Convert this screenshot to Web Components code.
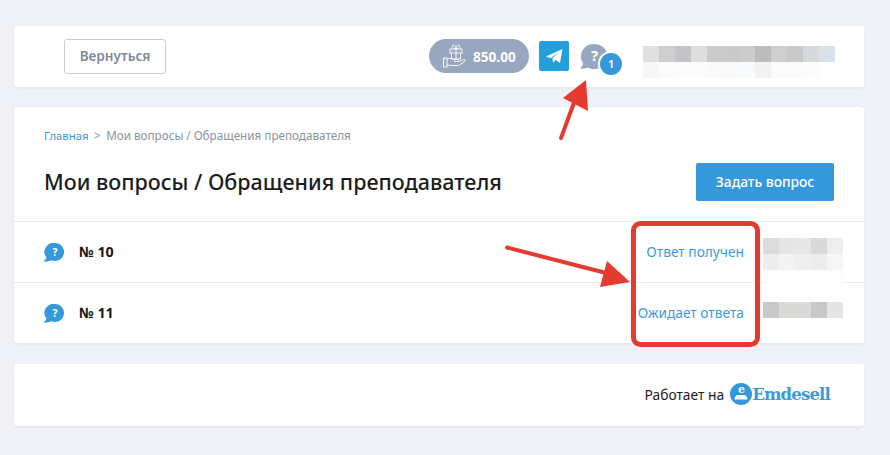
<!DOCTYPE html>
<html lang="ru"><head><meta charset="utf-8"><title>Мои вопросы</title>
<style>
html,body{margin:0;padding:0}
body{background:#f0f1f6;font-family:"Noto Sans","Open Sans",sans-serif;width:890px;height:455px;overflow:hidden;position:relative}
</style></head><body>
<app-page>
  <top-bar></top-bar>
  <questions-card>
    <question-row num="№ 10" status="Ответ получен" blur="a"></question-row>
    <question-row num="№ 11" status="Ожидает ответа" blur="b"></question-row>
  </questions-card>
  <foot-bar></foot-bar>
</app-page>
<note-overlay></note-overlay>
<script>
function def(name,html,init){
  customElements.define(name,class extends HTMLElement{
    connectedCallback(){
      if(this.shadowRoot)return;
      const r=this.attachShadow({mode:'open'});
      r.innerHTML=html;
      if(init)init(r,this);
    }
  });
}
function cells(r,sel,colors){
  const g=r.querySelector(sel);
  colors.forEach(c=>{const d=document.createElement('i');d.style.background=c;g.appendChild(d);});
}
def('app-page',`<style>:host{display:flex;flex-direction:column;gap:20px;padding:26px 26px 0 14px;width:850px}</style><slot></slot>`);
def('top-bar',`<style>
:host{display:flex;align-items:center;height:61px;background:#fff;border-radius:3px;box-shadow:0 1px 3px rgba(60,70,100,.08);padding:0 29px 0 50px}
.back{box-sizing:border-box;width:102px;height:35px;margin-top:-1px;padding-bottom:2px;border:1px solid #c9ced6;border-radius:3px;color:#7f8a96;font:600 13.6px "Noto Sans",sans-serif;display:flex;align-items:center;justify-content:center}
.sp{flex:1}
.bal{box-sizing:border-box;width:100px;height:34px;margin-top:-1px;border-radius:17px;background:#98a6c0;color:#fff;font:700 13.6px "Noto Sans",sans-serif;display:flex;align-items:center;padding-left:14px;gap:7px}
.tg{width:30px;height:30px;margin:-1px 0 0 10px;background:#259fdc;border-radius:2px;display:flex;align-items:center;justify-content:center}
.q{position:relative;width:44px;height:36px;margin:1px 0 0 10px}
.q .bub{position:absolute;left:0;top:4px}
.badge{position:absolute;left:21px;top:14px;width:22px;height:22px;border-radius:50%;background:#3498db;box-shadow:0 0 0 2px #fff;color:#fff;font:700 10px/22px "Noto Sans",sans-serif;text-align:center}
.blur{display:grid;grid-template-columns:repeat(12,16px);grid-auto-rows:16px;margin:11px 0 0 20px}
.blur i{display:block}
</style>
<div class="back">Вернуться</div><div class="sp"></div>
<div class="bal"><svg width="23" height="26" viewBox="0 0 23 26" fill="none" stroke="#fff" stroke-width=".9"><rect x="7" y="6" width="12" height="4"/><path d="M8.500 10v6h9v-6M13 6v10M13 6c-3-.500-4.500-2-3.500-3.500S13 3 13 6c0-3 2.500-5 3.500-3.500S16 5.500 13 6"/><rect x=".5" y="15" width="3.500" height="9"/><path d="M4 16.500c2-1.500 4-1.500 6 0h4c1.500 0 1.500 2 0 2h-3 5l4.500-2c1.500-.500 2 1 1 2l-6 4h-7l-4.500-.5"/></svg><span>850.00</span></div>
<div class="tg"><svg width="17" height="15" viewBox="0 0 17 15"><path fill="#fff" d="M0 7.500 16.500 0 14 14l-4.500-3.200-2.300 3.200-.8-4.700L13 3 4.500 9.300z"/></svg></div>
<div class="q"><svg class="bub" width="30" height="30" viewBox="0 0 30 30"><path fill="#98a6c0" d="M15.500 1a13 12.500 0 0 1 0 25c-2.500 0-4.500-.5-6.500-1.600-2.500.9-5 1.300-8 1.200 1.800-1.500 2.800-3 3.200-5A12.500 12.500 0 0 1 15.500 1z"/><text x="15.500" y="18" text-anchor="middle" fill="#fff" font-family="Noto Sans" font-weight="700" font-size="15">?</text></svg><div class="badge">1</div></div>
<div class="blur"></div>`,r=>cells(r,'.blur',['#e0e0e0','#cfcece','#c3c5c8','#dedede','#cbcbcb','#cacaca','#cbcccc','#bcbcbc','#cfcfcf','#c8c9ca','#d7d8da','#d9e2ea','#f6f6f6','#fbfbfb','#fcfcfc','#fcfcfc','#fafafa','#f8f9fa','#f9fafb','#f2f2f2','#fbfbfb','#fbfbfb','#fcfcfc','#fff']));
def('questions-card',`<style>
:host{display:block;height:236px;background:#fff;border-radius:3px;box-shadow:0 1px 3px rgba(60,70,100,.08);overflow:hidden}
.crumbs{padding:20px 30px 0;height:17px;font:11.7px/16px "Noto Sans",sans-serif;color:#8b939c;white-space:nowrap}
.crumbs b{font-weight:400;color:#3498db;font-size:11.3px}.crumbs span{margin:0 5.500px}
.head{display:flex;align-items:center;justify-content:space-between;padding:0 30px;height:38px;margin-top:19px}
h1{margin:0;font:500 21.500px/38px "Noto Sans",sans-serif;color:#1c1c1c}
.btn{width:138px;height:38px;background:#3498db;border-radius:2px;color:#fff;font:500 13.8px/38px "Noto Sans",sans-serif;text-align:center}
.rows{margin-top:20px;border-top:1px solid #e8ebf1}
</style>
<div class="crumbs"><b>Главная</b><span>&gt;</span>Мои вопросы / Обращения преподавателя</div>
<div class="head"><h1>Мои вопросы / Обращения преподавателя</h1><div class="btn">Задать вопрос</div></div>
<div class="rows"><slot></slot></div>`);
def('question-row',`<style>
:host{display:flex;align-items:center;height:60px;padding:0 21px 0 29px;position:relative}
:host(:not(:last-child)){border-bottom:1px solid #e8ebf1}
svg{display:block;margin-top:1px}
.n{margin:-2px 0 0 15px;font:700 14.300px "Noto Sans",sans-serif;color:#1a1a1a;flex:1}
.s{margin-top:-2px;font:13.75px "Noto Sans",sans-serif;color:#3d9bdc;white-space:nowrap}
.blur{width:80px;height:44px;margin-left:19px;display:grid;grid-template-columns:repeat(5,16px);grid-auto-rows:16px;align-self:flex-start;margin-top:16px}
.blur.b{margin-top:19px;height:16px}
.blur i{display:block}
</style>
<svg width="21" height="19" viewBox="0 0 21 19"><path fill="#3498db" d="M12 0a9 9 0 1 1-3.500 17.300c-2 1-5 1.500-8.500 1.200 1.800-1 3-2.200 3.500-4A9 9 0 0 1 12 0z"/><text x="12" y="13" text-anchor="middle" fill="#fff" font-family="Noto Sans" font-weight="700" font-size="10.500">?</text></svg>
<div class="n"></div><div class="s"></div><div class="blur"></div>`,(r,h)=>{
  r.querySelector('.n').textContent=h.getAttribute('num');
  r.querySelector('.s').textContent=h.getAttribute('status');
  const t=h.getAttribute('blur');
  r.querySelector('.blur').classList.add(t);
  cells(r,'.blur',t==='a'
    ?['#dcdbdb','#e6e6e4','#e6e7e7','#d9d9d9','#eeeeee','#ededed','#f3f3f1','#efefef','#ececec','#f6f6f6','#fdfdfd','#fdfdfd','#fdfdfd','#fdfdfd','#fdfdfd']
    :['#c9c9c9','#d9d9d5','#d8d9da','#c8c8c8','#e4e4e4']);
});
def('foot-bar',`<style>
:host{display:flex;align-items:center;justify-content:flex-end;height:62px;margin-top:1px;background:#fff;border-radius:3px;box-shadow:0 1px 3px rgba(60,70,100,.08);padding:0 34px 0 0;gap:6px}
.t{margin-top:-2px;font:13.8px "Noto Sans",sans-serif;color:#1c1c1c}
.logo{display:flex;align-items:center;gap:0;margin-top:-2px}
.e{font:700 16.500px "DejaVu Serif","Liberation Serif",serif;letter-spacing:-.82px;color:#3d9bdc}
</style>
<div class="t">Работает на</div>
<div class="logo"><svg width="22" height="22" viewBox="0 0 24 24"><circle cx="12" cy="12" r="12" fill="#3498db"/><text x="12.500" y="11" text-anchor="middle" font-family="DejaVu Serif" font-weight="700" font-size="12" fill="#fff">e</text><path fill="#fff" d="M5 18c0-3 1.500-5 4-5h6c2.500 0 4 2 4 5z"/></svg><span class="e">Emdesell</span></div>`);
def('note-overlay',`<style>:host{position:absolute;left:0;top:0;width:890px;height:455px;pointer-events:none}svg{display:block}</style>
<svg width="890" height="455" viewBox="0 0 890 455">
<rect x="633.500" y="223.500" width="124" height="121" rx="7" fill="none" stroke="#e53a30" stroke-width="5"/>
<path d="M561 138 575 100" stroke="#e53a30" stroke-width="4" stroke-linecap="round"/>
<path d="M586 80 563 98 588 111z" fill="#e53a30"/>
<path d="M507 247.500 610 274" stroke="#e53a30" stroke-width="4" stroke-linecap="round"/>
<path d="M630 282 607 261 600 287z" fill="#e53a30"/>
</svg>`);
</script></body></html>
